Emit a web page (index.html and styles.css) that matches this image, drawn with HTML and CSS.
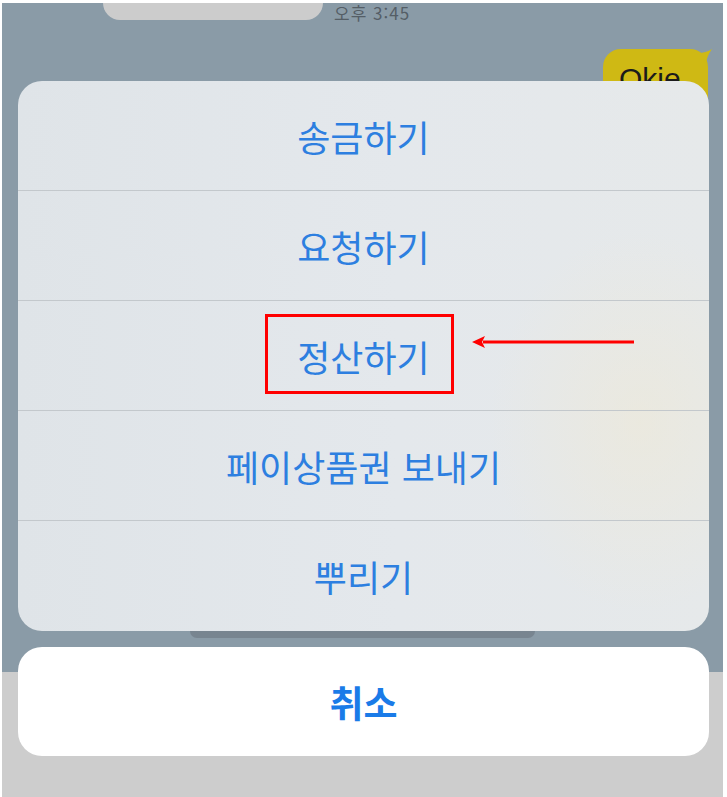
FILE: index.html
```html
<!DOCTYPE html>
<html lang="ko">
<head>
    <meta charset="UTF-8">
    <meta name="viewport" content="width=device-width, initial-scale=1.0">
    <title>Pay Menu</title>
    <link rel="stylesheet" href="styles.css">
</head>
<body>
<div class="screen">
    <div class="chat">
        <div class="row-in">
            <div class="bubble-in"></div>
            <span class="time">오후 3:45</span>
        </div>
        <div class="row-out">
            <div class="bubble-out">
                <span>Okie</span>
                <svg class="tail" width="14" height="14" viewBox="0 0 14 14">
                    <path d="M0 4 Q8 4 14 0 Q9 7 8 14 L0 14 Z" fill="#cfb914"/>
                </svg>
            </div>
        </div>
    </div>

    <div class="sheet">
        <div class="menu">
            <div class="menu-item">송금하기</div>
            <div class="menu-item">요청하기</div>
            <div class="menu-item">정산하기</div>
            <div class="menu-item">페이상품권 보내기</div>
            <div class="menu-item">뿌리기</div>
        </div>
        <div class="peek"></div>
        <div class="cancel">취소</div>
    </div>
</div>

<div class="mark-box"></div>
<svg class="mark-arrow" width="170" height="16" viewBox="0 0 170 16">
    <line x1="12" y1="8" x2="163" y2="8" stroke="#ff0000" stroke-width="3"/>
    <path d="M1 8 L14 2 L11 8 L14 14 Z" fill="#ff0000"/>
</svg>
</body>
</html>
```

FILE: styles.css
```css
body {
    margin: 0;
    background-color: #ffffff;
    font-family: "Noto Sans CJK KR", "Noto Sans", sans-serif;
}

.screen {
    position: relative;
    margin: 3px 4px 0 2px;
    height: 794px;
    background: linear-gradient(#8a9ba7 0, #8a9ba7 669px, #cdcdcd 669px);
}

/* chat behind the sheet */
.chat {
    display: flex;
    flex-direction: column;
}

.row-in {
    display: flex;
    align-items: flex-start;
    margin-left: 101px;
}

.bubble-in {
    width: 220px;
    height: 17px;
    background-color: #cccccc;
    border-radius: 0 0 18px 18px;
}

.time {
    margin-left: 11px;
    font-size: 17px;
    line-height: 20px;
    letter-spacing: 1px;
    color: #555e66;
}

.row-out {
    display: flex;
    justify-content: flex-end;
    margin-top: 26px;
    margin-right: 15px;
}

.bubble-out {
    position: relative;
    width: 105px;
    height: 80px;
    background-color: #cfb914;
    border-radius: 18px;
    box-sizing: border-box;
    padding: 13px 0 0 16px;
    font-family: "Liberation Sans", Arial, sans-serif;
    font-size: 30px;
    color: #1b1b1b;
}

.bubble-out .tail {
    position: absolute;
    top: 0;
    right: -4px;
}

/* action sheet */
.sheet {
    position: absolute;
    left: 16px;
    top: 78px;
    width: 691px;
}

.menu {
    border-radius: 24px;
    overflow: hidden;
    background:
        radial-gradient(ellipse 150px 190px at 90% 62%, rgba(238, 233, 215, 0.6), rgba(238, 233, 215, 0)),
        linear-gradient(90deg, #dfe4e8, #e4e8ec 55%, #e6e9ea);
}

.menu-item {
    height: 109px;
    display: flex;
    align-items: center;
    justify-content: center;
    font-size: 36px;
    color: #2d7fe0;
    border-bottom: 1px solid #c3c8cc;
}

.menu-item:last-child {
    border-bottom: none;
    height: 110px;
}

.peek {
    width: 345px;
    height: 7px;
    margin: 0 0 9px 172px;
    background-color: #788590;
    border-radius: 0 0 12px 12px;
}

.cancel {
    height: 109px;
    display: flex;
    align-items: center;
    justify-content: center;
    background-color: #ffffff;
    border-radius: 24px;
    font-size: 37px;
    font-weight: 700;
    color: #1a7be8;
}

/* red annotation */
.mark-box {
    position: absolute;
    left: 265px;
    top: 314px;
    width: 183px;
    height: 74px;
    border: 3px solid #ff0000;
}

.mark-arrow {
    position: absolute;
    left: 471px;
    top: 334px;
}
```
